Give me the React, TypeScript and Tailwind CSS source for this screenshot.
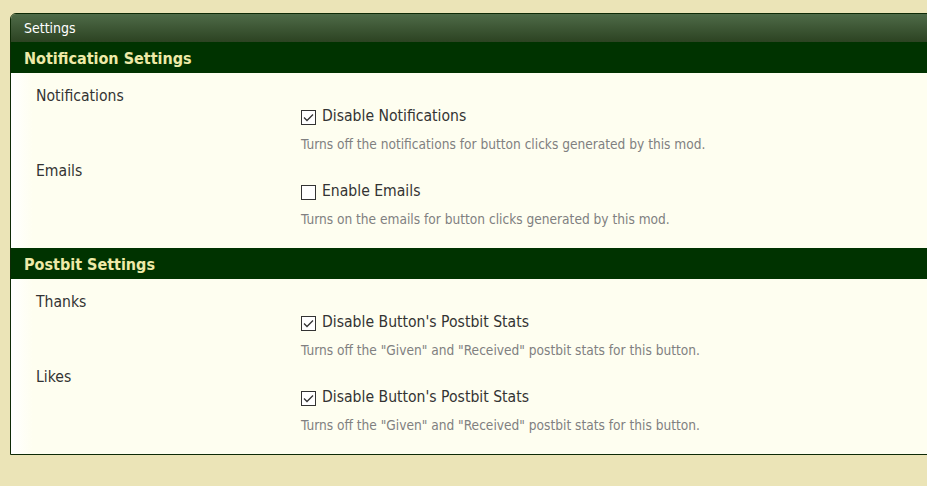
import React from 'react';

type Option = {
  label: string;
  option: string;
  checked: boolean;
  desc: string;
};

type Section = {
  title: string;
  items: Option[];
};

const sections: Section[] = [
  {
    title: 'Notification Settings',
    items: [
      {
        label: 'Notifications',
        option: 'Disable Notifications',
        checked: true,
        desc: 'Turns off the notifications for button clicks generated by this mod.',
      },
      {
        label: 'Emails',
        option: 'Enable Emails',
        checked: false,
        desc: 'Turns on the emails for button clicks generated by this mod.',
      },
    ],
  },
  {
    title: 'Postbit Settings',
    items: [
      {
        label: 'Thanks',
        option: "Disable Button's Postbit Stats",
        checked: true,
        desc: 'Turns off the "Given" and "Received" postbit stats for this button.',
      },
      {
        label: 'Likes',
        option: "Disable Button's Postbit Stats",
        checked: true,
        desc: 'Turns off the "Given" and "Received" postbit stats for this button.',
      },
    ],
  },
];

function CheckBox({ checked }: { checked: boolean }) {
  return (
    <span className="flex items-center justify-center w-[15px] h-[15px] border border-[#333] bg-white">
      {checked && (
        <svg width="11" height="9" viewBox="0 0 11 9" fill="none">
          <path d="M1 4.5 L4 7.5 L10 1.5" stroke="#333" strokeWidth="1.3" />
        </svg>
      )}
    </span>
  );
}

export default function App() {
  return (
    <div
      className="w-[927px] h-[486px] overflow-hidden bg-[#ebe4b7] pt-[13px] pl-[10px]"
      style={{ fontFamily: '"DejaVu Sans Condensed", "DejaVu Sans", sans-serif' }}
    >
      <div className="w-[940px] border border-[#0e2a06] rounded-tl-[6px] overflow-hidden">
        {/* 패널 제목 */}
        <div className="h-[28px] flex items-center pl-[13px] pt-[1px] text-[14px] text-white bg-gradient-to-b from-[#4f6b48] to-[#2c4322]">
          Settings
        </div>

        {sections.map((section) => (
          <section key={section.title}>
            <h2 className="h-[31px] flex items-center pl-[13px] pt-[2px] bg-[#003300] text-[16px] font-bold text-[#eeeaa8]">
              {section.title}
            </h2>

            <div className="flex flex-col gap-[9px] pt-[14px] pb-[20px] bg-[linear-gradient(to_right,#ffffff_0px,#fefef0_22px)] text-[#333]">
              {section.items.map((item) => (
                <div key={item.label} className="flex flex-col">
                  <div className="h-[20px] flex items-center pl-[25px] text-[15.6px]">{item.label}</div>
                  <label className="h-[20px] flex items-center gap-[6px] pl-[290px] text-[15.6px]">
                    <CheckBox checked={item.checked} />
                    {item.option}
                  </label>
                  <p className="h-[18px] mt-[8px] flex items-center pl-[290px] text-[13.6px] text-[#808080]">{item.desc}</p>
                </div>
              ))}
            </div>
          </section>
        ))}
      </div>
    </div>
  );
}
